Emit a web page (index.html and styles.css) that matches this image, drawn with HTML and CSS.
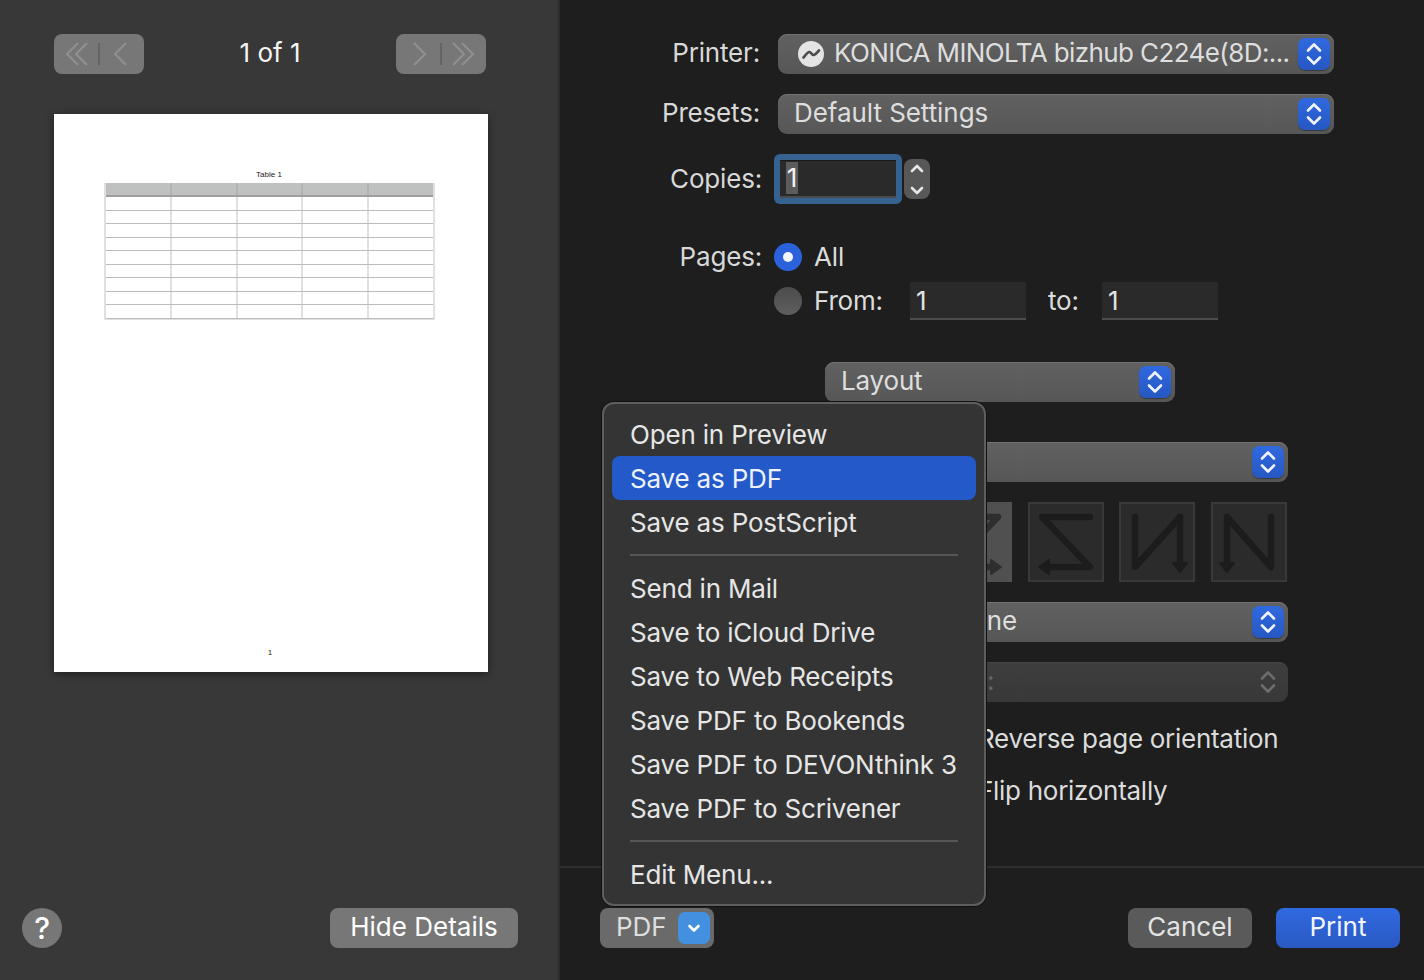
FILE: index.html
```html
<!DOCTYPE html>
<html lang="en">
<head>
<meta charset="utf-8">
<title>Print</title>
<link rel="stylesheet" href="styles.css">
</head>
<body>
<svg class="defs" width="0" height="0" aria-hidden="true">
  <symbol id="updown" viewBox="0 0 32 32"><path d="M10 12.5 16 6.5 22 12.5M10 19.5 16 25.5 22 19.5" fill="none" stroke="currentColor" stroke-width="2.6" stroke-linecap="round" stroke-linejoin="round"/></symbol>
</svg>
<div class="app">
  <aside class="side">
    <div class="pager">
      <div class="navbtn">
        <svg width="90" height="40" viewBox="0 0 90 40"><path d="M24 9 13 20 24 31M33 9 22 20 33 31M72 9 61 20 72 31" fill="none" stroke="#909090" stroke-width="2"/><path d="M45 9V31" stroke="#646464" stroke-width="2"/></svg>
      </div>
      <div class="pagecount">1 of 1</div>
      <div class="navbtn">
        <svg width="90" height="40" viewBox="0 0 90 40"><path d="M18 9 29 20 18 31M57 9 68 20 57 31M66 9 77 20 66 31" fill="none" stroke="#909090" stroke-width="2"/><path d="M45 9V31" stroke="#646464" stroke-width="2"/></svg>
      </div>
    </div>
    <div class="paper">
      <div class="sheet-title">Table 1</div>
      <div class="sheet-table">
        <div class="tr head"><i></i><i></i><i></i><i></i><i></i></div>
        <div class="tr"><i></i><i></i><i></i><i></i><i></i></div>
        <div class="tr"><i></i><i></i><i></i><i></i><i></i></div>
        <div class="tr"><i></i><i></i><i></i><i></i><i></i></div>
        <div class="tr"><i></i><i></i><i></i><i></i><i></i></div>
        <div class="tr"><i></i><i></i><i></i><i></i><i></i></div>
        <div class="tr"><i></i><i></i><i></i><i></i><i></i></div>
        <div class="tr"><i></i><i></i><i></i><i></i><i></i></div>
        <div class="tr"><i></i><i></i><i></i><i></i><i></i></div>
        <div class="tr"><i></i><i></i><i></i><i></i><i></i></div>
      </div>
      <div class="sheet-num">1</div>
    </div>
    <div class="side-foot">
      <div class="help">?</div>
      <div class="btn hide">Hide Details</div>
    </div>
  </aside>

  <main class="main">
    <div class="row printer-row">
      <label class="lbl">Printer:</label>
      <div class="select wide">
        <svg class="printer-ico" width="26" height="26" viewBox="0 0 26 26"><circle cx="13" cy="13" r="13" fill="#e4e4e4"/><path d="M5.500 16.500C7.500 14.500 9.500 10.500 11.500 11C13.500 11.500 14 14.500 16 14C18 13.500 19.500 11 21 9.500" fill="none" stroke="#4c4c4c" stroke-width="2.600" stroke-linecap="round" stroke-linejoin="round"/></svg>
        <span class="sel-text tight">KONICA MINOLTA bizhub C224e(8D:...</span>
        <span class="chev"><svg width="32" height="32"><use href="#updown"/></svg></span>
      </div>
    </div>
    <div class="row presets-row">
      <label class="lbl">Presets:</label>
      <div class="select wide">
        <span class="sel-text">Default Settings</span>
        <span class="chev"><svg width="32" height="32"><use href="#updown"/></svg></span>
      </div>
    </div>
    <div class="row copies-row">
      <label class="lbl lbl-b">Copies:</label>
      <div class="focus-ring"><div class="copies-input"><span class="sel-one">1</span></div></div>
      <div class="stepper">
        <span class="step"><svg width="26" height="20" viewBox="0 0 26 20"><path d="M8 12 13 7 18 12" fill="none" stroke="#e6e6e6" stroke-width="2.600" stroke-linecap="round" stroke-linejoin="round"/></svg></span>
        <span class="step"><svg width="26" height="20" viewBox="0 0 26 20"><path d="M8 8 13 13 18 8" fill="none" stroke="#e6e6e6" stroke-width="2.600" stroke-linecap="round" stroke-linejoin="round"/></svg></span>
      </div>
    </div>
    <div class="row pages-row">
      <label class="lbl lbl-b">Pages:</label>
      <span class="radio on"></span>
      <span class="opt">All</span>
    </div>
    <div class="row from-row">
      <span class="radio"></span>
      <span class="opt from">From:</span>
      <div class="field">1</div>
      <span class="opt to">to:</span>
      <div class="field">1</div>
    </div>

    <div class="select layout"><span class="sel-text">Layout</span><span class="chev"><svg width="32" height="32"><use href="#updown"/></svg></span></div>

    <div class="select narrow s1"><span class="chev"><svg width="32" height="32"><use href="#updown"/></svg></span></div>

    <div class="dirs">
      <div class="dir sel"><svg width="76" height="80" viewBox="0 0 76 80"><path d="M14 15H62L14 65H56" fill="none" stroke="#2e2e2e" stroke-width="6.500" stroke-linecap="round" stroke-linejoin="round"/><path d="M55 58 65 65 55 72Z" fill="#2e2e2e" stroke="#2e2e2e" stroke-width="2" stroke-linejoin="round"/></svg></div>
      <div class="dir"><svg width="76" height="80" viewBox="0 0 76 80"><path d="M62 15H14L62 65H20" fill="none" stroke="#1c1c1c" stroke-width="6.500" stroke-linecap="round" stroke-linejoin="round"/><path d="M21 58 11 65 21 72Z" fill="#1c1c1c" stroke="#1c1c1c" stroke-width="2" stroke-linejoin="round"/></svg></div>
      <div class="dir"><svg width="76" height="80" viewBox="0 0 76 80"><path d="M16 15V65L61 15V62" fill="none" stroke="#1c1c1c" stroke-width="6.500" stroke-linecap="round" stroke-linejoin="round"/><path d="M54 61 61 70 68 61Z" fill="#1c1c1c" stroke="#1c1c1c" stroke-width="2" stroke-linejoin="round"/></svg></div>
      <div class="dir"><svg width="76" height="80" viewBox="0 0 76 80"><path d="M16 62V15L60 65V15" fill="none" stroke="#1c1c1c" stroke-width="6.500" stroke-linecap="round" stroke-linejoin="round"/><path d="M9 61 16 70 23 61Z" fill="#1c1c1c" stroke="#1c1c1c" stroke-width="2" stroke-linejoin="round"/></svg></div>
    </div>

    <div class="select narrow s2"><span class="sel-text">None</span><span class="chev"><svg width="32" height="32"><use href="#updown"/></svg></span></div>
    <div class="select narrow s3"><span class="sel-text">On:</span><span class="chev ghost"><svg width="32" height="32"><use href="#updown"/></svg></span></div>

    <div class="check first">Reverse page orientation</div>
    <div class="check">Flip horizontally</div>

    <footer class="foot">
      <div class="btn pdf"><span>PDF</span><span class="pdf-chev"><svg width="32" height="32" viewBox="0 0 32 32"><path d="M11.500 14 16 18.500 20.500 14" fill="none" stroke="#fff" stroke-width="2.600" stroke-linecap="round" stroke-linejoin="round"/></svg></span></div>
      <div class="btn cancel">Cancel</div>
      <div class="btn print">Print</div>
    </footer>

    <nav class="menu">
      <div class="item">Open in Preview</div>
      <div class="item active">Save as PDF</div>
      <div class="item">Save as PostScript</div>
      <div class="sep"></div>
      <div class="item">Send in Mail</div>
      <div class="item">Save to iCloud Drive</div>
      <div class="item">Save to Web Receipts</div>
      <div class="item">Save PDF to Bookends</div>
      <div class="item">Save PDF to DEVONthink 3</div>
      <div class="item">Save PDF to Scrivener</div>
      <div class="sep"></div>
      <div class="item">Edit Menu...</div>
    </nav>
  </main>
</div>
</body>
</html>
```
FILE: styles.css
```css
* { box-sizing: border-box; }
html, body { margin: 0; height: 100%; }
body { width: 1424px; height: 980px; overflow: hidden; background: #1e1e1e; font-family: Inter, "Liberation Sans", sans-serif; font-size: 26px; letter-spacing: -0.18px; color: #dcdcdc; }
.defs { position: absolute; }
.app { display: flex; height: 980px; }

/* sidebar */
.side { width: 560px; flex: none; background: #383838; border-right: 2px solid #2c2c2c; display: flex; flex-direction: column; padding: 34px 0 32px; }
.pager { display: flex; align-items: center; justify-content: space-between; padding: 0 72px 0 54px; height: 40px; }
.navbtn { width: 90px; height: 40px; border-radius: 8px; background: #777; }
.navbtn svg { display: block; }
.pagecount { color: #f4f4f4; width: 80px; text-align: center; padding-bottom: 4px; letter-spacing: 0; }
.paper { width: 434px; height: 558px; margin: 40px 0 0 54px; background: #fff; box-shadow: 0 2px 8px rgba(0,0,0,.45); display: flex; flex-direction: column; align-items: center; padding-top: 56px; color: #333; letter-spacing: 0; }
.sheet-title { font-family: "Liberation Sans", sans-serif; font-size: 8px; line-height: 8px; height: 13px; margin-right: 4px; padding-top: 1px; color: #222; }
.sheet-table { width: 331px; align-self: flex-start; margin-left: 50px; border-left: 2px solid #e0e0e0; border-right: 2px solid #e0e0e0; border-bottom: 1px solid #e0e0e0; }
.tr { display: flex; height: 13.5px; border-bottom: 1px solid #bcbcbc; }
.tr i { flex: 1; border-right: 2px solid #e0e0e0; }
.tr i:last-child { border-right: 0; }
.tr.head { height: 14px; background: #bfc1c0; border-bottom: 2px solid #9e9e9e; }
.tr.head i { border-right-color: #b2b2b2; }
.sheet-num { font-family: "Liberation Sans", sans-serif; font-size: 8px; line-height: 8px; margin-top: 329px; margin-right: 2px; color: #222; }
.side-foot { margin-top: auto; display: flex; justify-content: space-between; align-items: center; padding: 0 40px 0 22px; }
.help { width: 40px; height: 40px; border-radius: 50%; background: #777; color: #fff; font-weight: 500; text-align: center; line-height: 40px; font-size: 30px; }
.btn { height: 40px; border-radius: 8px; display: flex; align-items: center; justify-content: center; padding-bottom: 4px; letter-spacing: 0; }
.hide { width: 188px; background: #777; color: #fff; }

/* main */
.main { position: relative; flex: 1; padding-top: 34px; }
.row { display: flex; align-items: center; }
.lbl { width: 200px; text-align: right; color: #d8d8d8; flex: none; padding-bottom: 2px; }
.printer-row .lbl, .presets-row .lbl { padding-bottom: 3px; }
.lbl-b { width: 202px; }
.select { height: 40px; border-radius: 9px; background: linear-gradient(#616161, #575757); box-shadow: inset 0 1px 0 #737373; display: flex; align-items: center; padding-right: 4px; color: #dedede; }
.chev { margin-left: auto; width: 32px; height: 32px; border-radius: 7px; background: linear-gradient(#3069e0, #2657c2); color: #f0f4ff; flex: none; box-shadow: 0 1px 1px rgba(0,0,0,.35); }
.chev svg { display: block; }
.chev.ghost { background: none; box-shadow: none; color: #6d6d6d; }
.wide { width: 556px; margin-left: 18px; }
.printer-ico { margin-left: 20px; flex: none; }
.sel-text { margin-left: 16px; white-space: nowrap; padding-bottom: 4px; }
.printer-ico + .sel-text { margin-left: 10px; }
.tight { letter-spacing: -0.6px; }
.presets-row { margin-top: 20px; }
.presets-row .sel-text { letter-spacing: -0.06px; }
.copies-row { margin-top: 20px; height: 50px; }
.focus-ring { width: 128px; height: 50px; margin-left: 12px; border-radius: 6px; background: #35628f; padding: 6px; }
.copies-input { height: 38px; background: #2a2a2a; border-bottom: 2px solid #4c4c4c; box-shadow: inset 0 1px 0 #1a1a1a; padding: 2px 0 0 6px; line-height: 34px; color: #f2f2f2; }
.sel-one { display: inline-block; width: 12px; height: 32px; line-height: 32px; background: #5c5c5c; vertical-align: top; text-align: center; }
.stepper { width: 26px; height: 40px; margin-left: 2px; border-radius: 8px; background: #585858; display: flex; flex-direction: column; gap: 1px; overflow: hidden; }
.step { height: 20px; }
.step svg { display: block; }
.pages-row { margin-top: 39px; height: 28px; }
.radio { width: 28px; height: 28px; border-radius: 50%; background: linear-gradient(#4c4c4c, #5e5e5e); margin-left: 12px; flex: none; position: relative; }
.radio.on { background: #2b62dc; }
.radio.on::after { content: ""; position: absolute; left: 9px; top: 9px; width: 10px; height: 10px; border-radius: 50%; background: #f2f4ff; }
.opt { margin-left: 12px; color: #dcdcdc; padding-bottom: 2px; }
.from-row { margin-top: 11px; height: 38px; padding-left: 202px; }
.from { width: 84px; }
.field { width: 116px; height: 38px; background: #2a2a2a; border-bottom: 2px solid #4c4c4c; padding-left: 6px; line-height: 38px; color: #e4e4e4; }
.from + .field { margin-left: 12px; }
.to { margin-left: 22px; width: 54px; }
.layout { width: 350px; margin: 42px 0 0 265px; }
.narrow { width: 352px; margin: 40px 0 0 376px; }
.dirs { display: flex; gap: 15.67px; margin: 20px 0 0 376px; }
.dir { width: 76px; height: 80px; background: #2b2b2b; box-shadow: inset 0 0 0 2px #393939; }
.dir.sel { background: #505050; box-shadow: none; }
.dir svg { display: block; }
.s2 { margin-top: 20px; }
.s3 { margin-top: 20px; background: linear-gradient(#3e3e3e, #383838); box-shadow: inset 0 1px 0 #454545; color: #666; }
.check { margin: 20px 0 0 418px; height: 32px; line-height: 32px; color: #dcdcdc; white-space: nowrap; letter-spacing: -0.28px; }
.check.first { margin-top: 21px; }
.foot { position: absolute; left: 0; right: 0; top: 866px; height: 114px; border-top: 2px solid #2e2e2e; display: flex; align-items: flex-start; padding: 40px 24px 0 40px; }
.pdf { width: 114px; background: #6a6a6a; justify-content: flex-start; padding-left: 16px; padding-bottom: 0; color: #dedede; }
.pdf > span:first-child { padding-bottom: 4px; }
.pdf-chev { width: 32px; height: 32px; margin-left: auto; margin-right: 4px; border-radius: 7px; background: #4390e0; flex: none; }
.pdf-chev svg { display: block; }
.cancel { width: 124px; margin-left: auto; background: #5a5a5a; color: #e4e4e4; }
.print { width: 124px; margin-left: 24px; background: linear-gradient(#3069e0, #2a59c2); color: #f4f6ff; }

/* popup */
.menu { position: absolute; left: 42px; top: 402px; width: 384px; height: 504px; border-radius: 12px; background: #343434; box-shadow: 0 0 0 1px #111, inset 0 0 0 2px #5e5e5e; padding: 10px 10px 0; }
.item { height: 44px; line-height: 46px; padding-left: 18px; border-radius: 8px; color: #e6e6e6; white-space: nowrap; }
.item.active { background: #2359c9; color: #eef2ff; }
.sep { height: 2px; background: #565656; margin: 10px 18px; }
```
